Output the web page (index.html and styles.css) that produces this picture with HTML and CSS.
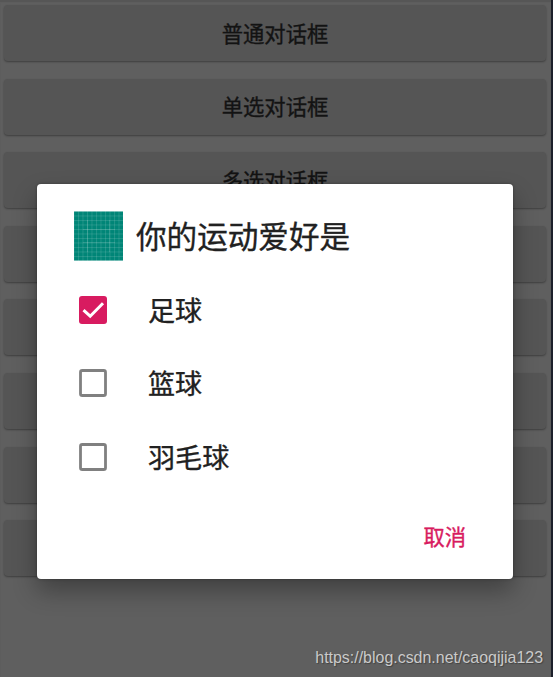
FILE: index.html
```html
<!DOCTYPE html>
<html lang="zh-CN">
<head>
  <meta charset="UTF-8">
  <title>对话框</title>
  <meta name="viewport" content="width=device-width, initial-scale=1.0">
  <link rel="stylesheet" href="styles.css">
</head>
<body>

  <div class="screen">
    <div class="button-list">
      <button class="btn">普通对话框</button>
      <button class="btn">单选对话框</button>
      <button class="btn">多选对话框</button>
      <button class="btn"></button>
      <button class="btn"></button>
      <button class="btn"></button>
      <button class="btn"></button>
      <button class="btn"></button>
    </div>

    <div class="dialog">
      <div class="dialog-title">
        <svg class="app-icon" viewBox="0 0 49 50">
          <defs>
            <pattern id="grid" x="4" y="4.5" width="4.5" height="4.5" patternUnits="userSpaceOnUse">
              <path d="M0 .5H4.5M.5 0V4.5" stroke="#fff" stroke-opacity=".13" stroke-width=".9"/>
            </pattern>
          </defs>
          <rect width="49" height="50" fill="#008577"/>
          <rect width="49" height="50" fill="url(#grid)"/>
          <path d="M13.5 9V41M35.5 9V41M9 18.5H41M9 31.5H41" stroke="#fff" stroke-opacity=".12"/>
          <path d="M0 .5H49M0 49.5H49" stroke="#fff" stroke-opacity=".4"/>
        </svg>
        <span>你的运动爱好是</span>
      </div>

      <div class="option">
        <svg class="checkbox" viewBox="0 0 28 28">
          <rect width="28" height="28" rx="3" fill="#d81b60"/>
          <path d="M4.5 14.2L11.2 20.2L24 7.3" fill="none" stroke="#fff" stroke-width="3"/>
        </svg>
        <span>足球</span>
      </div>
      <div class="option">
        <svg class="checkbox" viewBox="0 0 28 28">
          <rect x="1.5" y="1.5" width="25" height="25" rx="1.8" fill="none" stroke="#808080" stroke-width="2.8"/>
        </svg>
        <span>篮球</span>
      </div>
      <div class="option">
        <svg class="checkbox" viewBox="0 0 28 28">
          <rect x="1.5" y="1.5" width="25" height="25" rx="1.8" fill="none" stroke="#808080" stroke-width="2.8"/>
        </svg>
        <span>羽毛球</span>
      </div>

      <div class="actions">
        <span class="cancel">取消</span>
      </div>
    </div>

    <div class="watermark">https://blog.csdn.net/caoqijia123</div>
  </div>

</body>
</html>
```

FILE: styles.css
```css
body {
  margin: 0;
  font-family: "Noto Sans CJK SC", sans-serif;
  -webkit-text-stroke: 0.35px currentColor;
}

.screen {
  position: relative;
  box-sizing: border-box;
  height: 677px;
  overflow: hidden;
  background: #5f5f5f;
  border-right: 2px solid #1d202b;
  box-shadow: inset 0 2px 1px #565656;
}

.button-list {
  display: flex;
  flex-direction: column;
  gap: 17.6px;
  padding: 5px 5px 0 4px;
}

.btn {
  height: 56px;
  padding: 0 0 1px;
  border: 0;
  border-radius: 4px;
  background: #555;
  box-shadow: 0 1px 2px rgba(0,0,0,0.35);
  color: #131313;
  font-family: inherit;
  font-size: 21.3px;
  line-height: 30px;
}

.dialog {
  position: absolute;
  left: 37px;
  top: 184px;
  box-sizing: border-box;
  width: 476px;
  height: 395px;
  padding-top: 27px;
  border-radius: 4px;
  background: #fff;
  box-shadow: 0 12px 24px rgba(0,0,0,0.32), 0 0 3px rgba(0,0,0,0.3);
  color: #212121;
}

.dialog-title {
  display: flex;
  align-items: center;
  gap: 13px;
  height: 50px;
  margin-bottom: 12px;
  padding-left: 37px;
  font-size: 30.6px;
  line-height: 48px;
}

.dialog-title span {
  padding-bottom: 2px;
}

.app-icon {
  width: 49px;
  height: 50px;
}

.option {
  display: flex;
  align-items: center;
  gap: 41.5px;
  height: 73.5px;
  padding-left: 41.5px;
  font-size: 27.1px;
  line-height: 40px;
}

.checkbox {
  width: 28px;
  height: 28px;
}

.actions {
  display: flex;
  justify-content: flex-end;
  margin-top: 26px;
  padding-right: 47px;
}

.cancel {
  color: #d81b60;
  font-size: 21.3px;
  line-height: 32px;
}

.watermark {
  position: absolute;
  right: 8px;
  bottom: 8px;
  color: #cacaca;
  font-family: "Liberation Sans", Arial, sans-serif;
  font-size: 15.95px;
  line-height: 22px;
  text-shadow: 1px 1px 1px rgba(0,0,0,0.3);
  -webkit-text-stroke: 0;
}
```
